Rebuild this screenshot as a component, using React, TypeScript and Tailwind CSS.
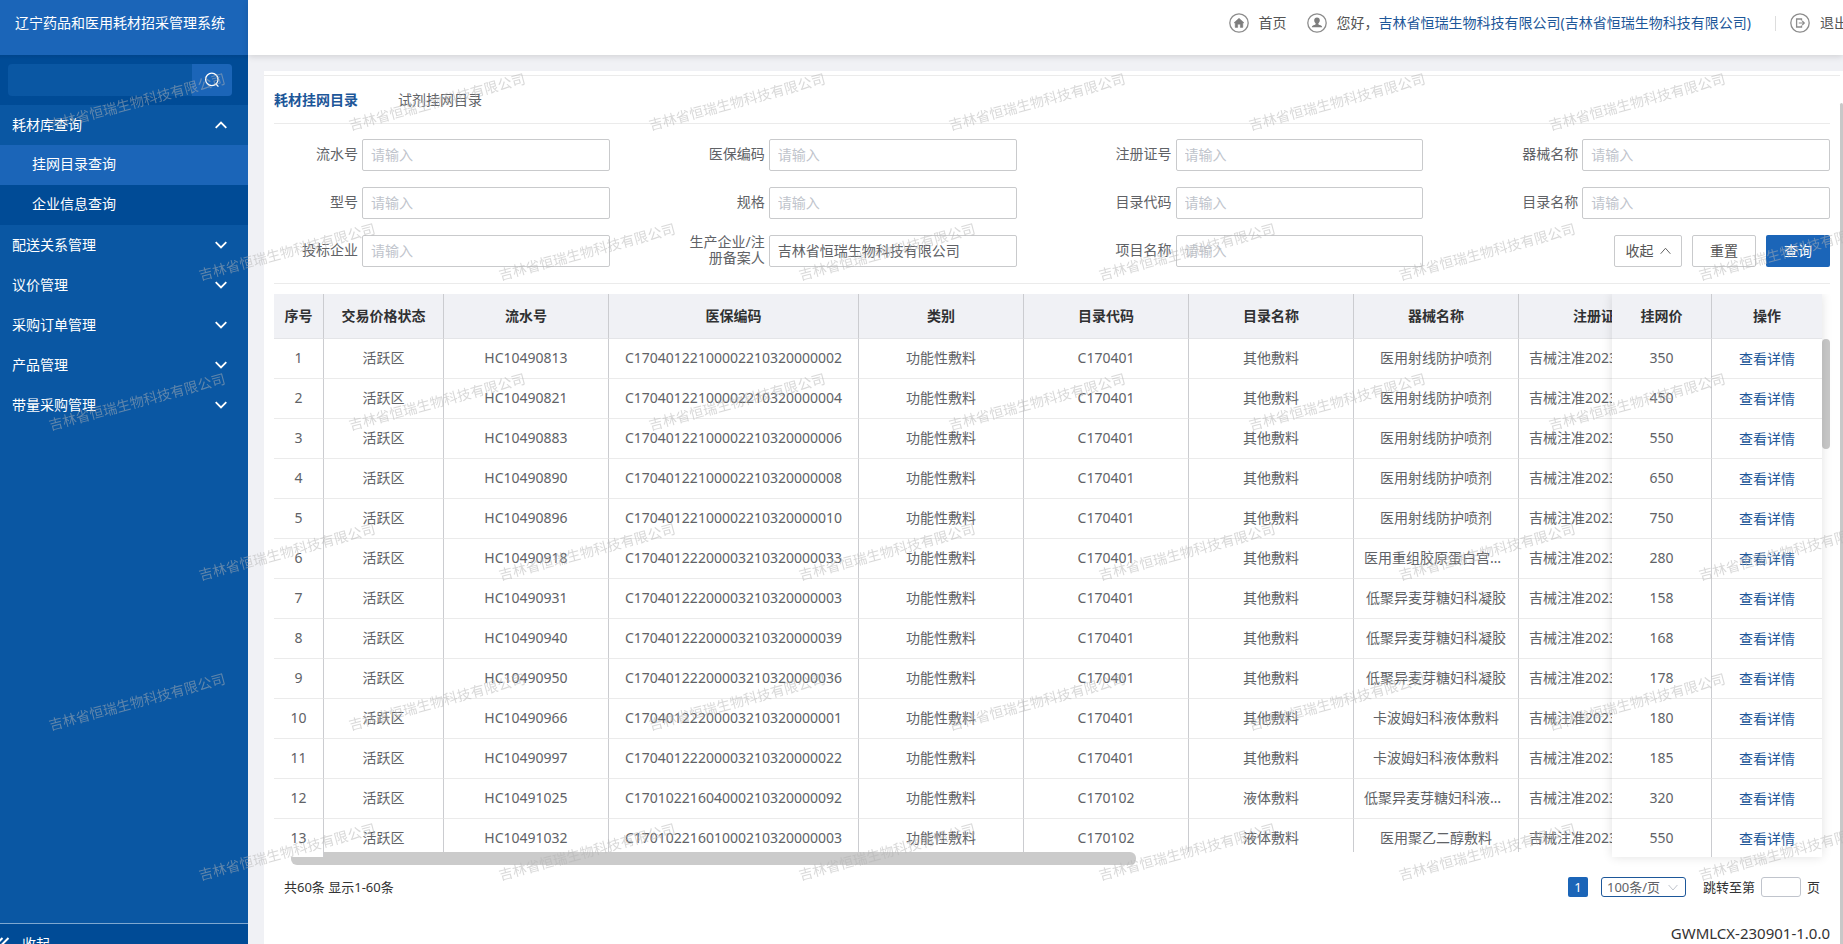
import React, { useId, useState } from "react";

const COMPANY = "吉林省恒瑞生物科技有限公司";

const MENU = ["配送关系管理", "议价管理", "采购订单管理", "产品管理", "带量采购管理"];

type Row = {
  no: string;
  code: string;
  catCode: string;
  catName: string;
  device: string;
  price: number;
};

const ROWS: Row[] = [
  { no: "HC10490813", code: "C17040122100002210320000002", catCode: "C170401", catName: "其他敷料", device: "医用射线防护喷剂", price: 350 },
  { no: "HC10490821", code: "C17040122100002210320000004", catCode: "C170401", catName: "其他敷料", device: "医用射线防护喷剂", price: 450 },
  { no: "HC10490883", code: "C17040122100002210320000006", catCode: "C170401", catName: "其他敷料", device: "医用射线防护喷剂", price: 550 },
  { no: "HC10490890", code: "C17040122100002210320000008", catCode: "C170401", catName: "其他敷料", device: "医用射线防护喷剂", price: 650 },
  { no: "HC10490896", code: "C17040122100002210320000010", catCode: "C170401", catName: "其他敷料", device: "医用射线防护喷剂", price: 750 },
  { no: "HC10490918", code: "C17040122200003210320000033", catCode: "C170401", catName: "其他敷料", device: "医用重组胶原蛋白宫颈凝胶", price: 280 },
  { no: "HC10490931", code: "C17040122200003210320000003", catCode: "C170401", catName: "其他敷料", device: "低聚异麦芽糖妇科凝胶", price: 158 },
  { no: "HC10490940", code: "C17040122200003210320000039", catCode: "C170401", catName: "其他敷料", device: "低聚异麦芽糖妇科凝胶", price: 168 },
  { no: "HC10490950", code: "C17040122200003210320000036", catCode: "C170401", catName: "其他敷料", device: "低聚异麦芽糖妇科凝胶", price: 178 },
  { no: "HC10490966", code: "C17040122200003210320000001", catCode: "C170401", catName: "其他敷料", device: "卡波姆妇科液体敷料", price: 180 },
  { no: "HC10490997", code: "C17040122200003210320000022", catCode: "C170401", catName: "其他敷料", device: "卡波姆妇科液体敷料", price: 185 },
  { no: "HC10491025", code: "C17010221604000210320000092", catCode: "C170102", catName: "液体敷料", device: "低聚异麦芽糖妇科液体敷料", price: 320 },
  { no: "HC10491032", code: "C17010221601000210320000003", catCode: "C170102", catName: "液体敷料", device: "医用聚乙二醇敷料", price: 550 },
];

function Chevron({ up = false }: { up?: boolean }) {
  return (
    <svg viewBox="0 0 12 8" className="h-2 w-3" fill="none" stroke="currentColor" strokeWidth="1.8">
      <path d={up ? "M0.7 6.8 L6 1.6 L11.3 6.8" : "M0.7 1.2 L6 6.4 L11.3 1.2"} />
    </svg>
  );
}

function HomeIcon() {
  return (
    <svg viewBox="0 0 20 20" className="size-5" fill="none">
      <circle cx="10" cy="10" r="9.2" stroke="#8c8c8c" strokeWidth="1.3" />
      <path d="M10 5.2 L15 9.8 H13.8 V14.4 H11.3 V11.2 H8.7 V14.4 H6.2 V9.8 H5 Z" fill="#7d7d7d" stroke="#7d7d7d" strokeWidth="0.5" strokeLinejoin="round" />
    </svg>
  );
}

function UserIcon() {
  return (
    <svg viewBox="0 0 20 20" className="size-5" fill="none">
      <circle cx="10" cy="10" r="9.2" stroke="#8c8c8c" strokeWidth="1.3" />
      <path
        d="M10 4.4 C8.2 4.4 7.2 5.7 7.2 7.3 C7.2 8.6 7.8 9.8 8.7 10.5 C8.7 11.4 8.4 11.8 7.4 12.1 C6 12.5 5 12.9 4.8 14.2 H15.2 C15 12.9 14 12.5 12.6 12.1 C11.6 11.8 11.3 11.4 11.3 10.5 C12.2 9.8 12.8 8.6 12.8 7.3 C12.8 5.7 11.8 4.4 10 4.4 Z"
        fill="#7d7d7d"
      />
    </svg>
  );
}

function LogoutIcon() {
  return (
    <svg viewBox="0 0 20 20" className="size-5" fill="none" stroke="#8c8c8c">
      <circle cx="10" cy="10" r="9.2" strokeWidth="1.3" />
      <path d="M11.5 7.6 V6 H6.6 V14 H11.5 V12.4" strokeWidth="1.3" />
      <path d="M8.8 10 H14 M12.2 7.9 L14.3 10 L12.2 12.1" strokeWidth="1.2" />
    </svg>
  );
}

function Sidebar() {
  const [keyword, setKeyword] = useState("");
  return (
    <aside className="flex w-[248px] shrink-0 flex-col bg-[#0a57a3] text-white">
      <h1 className="h-[55px] shrink-0 bg-[#1b65b8] pl-[15px] pt-3 text-sm leading-[22px]">
        辽宁药品和医用耗材招采管理系统
      </h1>
      <div className="shrink-0 bg-[#004b96] bg-linear-to-b from-[#00458c] to-[#004b96] to-10% py-[9px] pl-2 pr-4">
        <div className="flex h-8 overflow-hidden rounded bg-[#0a57a3]">
          <input
            aria-label="菜单搜索"
            value={keyword}
            onChange={(e) => setKeyword(e.target.value)}
            className="min-w-0 flex-1 bg-transparent px-3 text-sm outline-none"
          />
          <button type="button" aria-label="搜索" className="flex w-10 items-center justify-center bg-[#1b65b8]">
            <svg viewBox="0 0 16 16" className="size-4" fill="none" stroke="#fff" strokeWidth="1.3">
              <circle cx="7.8" cy="7.4" r="6.2" />
              <path d="M12 12 L14.4 14.6" />
            </svg>
          </button>
        </div>
      </div>
      <nav className="flex-1 text-sm">
        <button type="button" className="flex h-10 w-full items-center justify-between pl-3 pr-[21px]">
          耗材库查询
          <Chevron up />
        </button>
        <a href="#catalog" className="flex h-10 items-center bg-[#1b65b8] pb-0.5 pl-8">
          挂网目录查询
        </a>
        <a href="#company" className="flex h-10 items-center bg-[#004b96] pb-0.5 pl-8">
          企业信息查询
        </a>
        {MENU.map((m) => (
          <button key={m} type="button" className="flex h-10 w-full items-center justify-between pl-3 pr-[21px]">
            {m}
            <Chevron />
          </button>
        ))}
      </nav>
      <button
        type="button"
        className="-mb-[19px] flex h-10 shrink-0 items-center gap-3 border-t border-[#7fa8d0] bg-[#004b96] text-sm"
      >
        <svg viewBox="0 0 16 16" className="-ml-[6px] size-4" fill="none" stroke="#fff" strokeWidth="2">
          <path d="M8.5 2 L2.5 8 L8.5 14 M14.5 2 L8.5 8 L14.5 14" />
        </svg>
        收起
      </button>
    </aside>
  );
}

function Header() {
  return (
    <header className="relative z-10 h-[55px] shrink-0 overflow-visible bg-white shadow-[0_2px_6px_rgba(0,0,0,0.12)]">
      <div className="-mr-[5px] flex items-center justify-end pt-[9px] text-sm leading-7 whitespace-nowrap text-[#555]">
        <a href="#home" className="flex items-center gap-2.5">
          <HomeIcon />
          首页
        </a>
        <div className="ml-5 flex items-center">
          <UserIcon />
          <span className="ml-2.5">您好，</span>
          <a href="#account" className="text-[#1d5799]">
            {COMPANY}({COMPANY})
          </a>
        </div>
        <div className="ml-6 mr-3.5 h-[15px] w-px bg-[#ddd]" />
        <a href="#logout" className="flex items-center gap-2.5">
          <LogoutIcon />
          退出
        </a>
      </div>
    </header>
  );
}

function Field({ label, value = "" }: { label: string; value?: string }) {
  const id = useId();
  const [text, setText] = useState(value);
  return (
    <div className="flex h-8 items-center gap-1">
      <label htmlFor={id} className="w-[84px] shrink-0 pb-0.5 text-right text-sm leading-4 text-[#606266]">
        {label}
      </label>
      <input
        id={id}
        value={text}
        placeholder="请输入"
        onChange={(e) => setText(e.target.value)}
        className="h-8 min-w-0 flex-1 rounded-xs border border-[#c9cacc] bg-white px-2 pb-0.5 text-sm text-[#606266] outline-none placeholder:text-[#c0c4cc]"
      />
    </div>
  );
}

function SearchForm() {
  return (
    <form className="border-b border-[#ebebeb] pb-4 pt-[15px]" onSubmit={(e) => e.preventDefault()}>
      <div className="grid grid-cols-4 gap-x-[71px] gap-y-4">
        <Field label="流水号" />
        <Field label="医保编码" />
        <Field label="注册证号" />
        <Field label="器械名称" />
        <Field label="型号" />
        <Field label="规格" />
        <Field label="目录代码" />
        <Field label="目录名称" />
        <Field label="投标企业" />
        <Field label="生产企业/注册备案人" value={COMPANY} />
        <Field label="项目名称" />
        <div className="flex justify-end gap-2.5 text-sm text-[#555]">
          <button type="button" className="flex h-8 w-[68px] items-center justify-center gap-1.5 rounded-xs border border-[#c9cacc]">
            收起
            <svg viewBox="0 0 12 8" className="h-2 w-[11px]" fill="none" stroke="currentColor" strokeWidth="1">
              <path d="M0.7 7 L6 1 L11.3 7" />
            </svg>
          </button>
          <button type="reset" className="h-8 w-16 rounded-xs border border-[#c9cacc]">
            重置
          </button>
          <button type="submit" className="h-8 w-16 rounded-xs bg-[#1b65b8] text-white">
            查询
          </button>
        </div>
      </div>
    </form>
  );
}

const TH = "sticky top-0 h-[45px] border-b border-b-[#e4e5e8] bg-[#f0f1f5] px-2.5 text-center font-bold";
const TD = "h-10 truncate border-b border-b-[#ebebeb] px-2.5 text-center";
const LINE = "border-r border-r-[#cbccd0]";

function ResultTable() {
  return (
    <div className="relative mt-2.5 pr-2">
      <div className="h-[563px] overflow-auto [scrollbar-width:none]">
        <table className="w-full min-w-[1620px] table-fixed border-separate border-spacing-0 text-sm text-[#606266]">
          <colgroup>
            <col className="w-[50px]" />
            <col className="w-[120px]" />
            <col className="w-[165px]" />
            <col className="w-[250px]" />
            <col className="w-[165px]" />
            <col className="w-[165px]" />
            <col className="w-[165px]" />
            <col className="w-[165px]" />
            <col className="w-[165px]" />
            <col className="w-[100px]" />
            <col className="w-[110px]" />
          </colgroup>
          <thead className="text-[#303133]">
            <tr>
              <th className="sticky left-0 top-0 z-30 h-[45px] border-b border-r border-b-[#e4e5e8] border-r-[#cbccd0] bg-[#f0f1f5] text-center font-bold">序号</th>
              {["交易价格状态", "流水号", "医保编码", "类别", "目录代码", "目录名称", "器械名称", "注册证号"].map((h) => (
                <th key={h} className={`${TH} ${LINE} z-10`}>
                  {h}
                </th>
              ))}
              <th className={`${TH} ${LINE} right-[110px] z-30`}>挂网价</th>
              <th className={`${TH} right-0 z-30`}>操作</th>
            </tr>
          </thead>
          <tbody>
            {ROWS.map((r, i) => (
              <tr key={r.no}>
                <td className="sticky left-0 z-20 h-10 border-b border-r border-b-[#ebebeb] border-r-[#cbccd0] bg-white pb-0.5 text-center">{i + 1}</td>
                <td className={`${TD} ${LINE} pb-0.5`}>活跃区</td>
                <td className={`${TD} ${LINE} pb-0.5`}>{r.no}</td>
                <td className={`${TD} ${LINE} pb-0.5`}>{r.code}</td>
                <td className={`${TD} ${LINE} pb-0.5`}>功能性敷料</td>
                <td className={`${TD} ${LINE} pb-0.5`}>{r.catCode}</td>
                <td className={`${TD} ${LINE} pb-0.5`}>{r.catName}</td>
                <td className={`${TD} ${LINE} pb-0.5`}>{r.device}</td>
                <td className={`${TD} ${LINE} pb-0.5`}>吉械注准20232140001</td>
                <td className={`${TD} ${LINE} sticky right-[110px] z-20 bg-white pb-0.5`}>{r.price}</td>
                <td className={`${TD} sticky right-0 z-20 bg-white`}>
                  <a href="#detail" className="text-[#1d5799]">
                    查看详情
                  </a>
                </td>
              </tr>
            ))}
          </tbody>
        </table>
      </div>
      {/* horizontal scrollbar, partly under the pinned columns */}
      <div className="absolute inset-x-0 bottom-0 z-10 h-[5px] bg-white">
        <div className="ml-[17px] h-[13px] w-[845px] rounded-md bg-[#cbcbcb]" />
      </div>
      {/* vertical scrollbar */}
      <div className="absolute right-0 top-[45px] h-[110px] w-2 rounded bg-[#c8c8c8]" />
      {/* shadow round the columns pinned to the right */}
      <div className="pointer-events-none absolute bottom-0 right-2 top-0 z-10 w-[210px] shadow-[0_0_10px_rgba(0,0,0,0.12)] [clip-path:inset(0_-12px_-16px_-12px)]" />
    </div>
  );
}

function Pagination() {
  return (
    <div className="mt-5 flex h-5 items-center justify-between px-2.5 text-[13px] leading-5 text-[#333]">
      <span>共60条 显示1-60条</span>
      <div className="flex items-center">
        <button type="button" className="size-5 rounded-xs bg-[#1b65b8] text-white">
          1
        </button>
        <div className="relative ml-[13px] flex h-5 w-[85px]">
          <select
            aria-label="每页条数"
            className="h-5 w-full appearance-none rounded-[3px] border border-[#1d5799] bg-white pl-[5px] leading-4 text-[#606266] outline-none"
          >
            <option>100条/页</option>
          </select>
          <svg viewBox="0 0 12 8" className="pointer-events-none absolute right-2 top-[7px] h-[7px] w-[10px]" fill="none" stroke="#c0c4cc" strokeWidth="1.2">
            <path d="M0.7 1 L6 7 L11.3 1" />
          </svg>
        </div>
        <label htmlFor="jump" className="ml-[17px]">
          跳转至第
        </label>
        <input id="jump" className="ml-1.5 mr-1.5 h-5 w-10 rounded-[3px] border border-[#c0c4cc] px-1 outline-none" />
        页
      </div>
    </div>
  );
}

function Watermark() {
  return (
    <div aria-hidden="true" className="pointer-events-none absolute inset-0 z-50 overflow-hidden pt-[27px] text-sm text-[#b4b4b4]/50">
      {[0, 1, 2, 3, 4, 5].map((r) => (
        <div key={r} className={r % 2 ? "flex h-[150px] items-center pl-[196px]" : "flex h-[150px] items-center pl-[46px]"}>
          {[0, 1, 2, 3, 4, 5].map((c) => (
            <div key={c} className="w-[300px] shrink-0">
              <span className="inline-block -rotate-15 whitespace-nowrap">{COMPANY}</span>
            </div>
          ))}
        </div>
      ))}
    </div>
  );
}

export default function App() {
  return (
    <div className="relative flex h-screen overflow-hidden bg-[#f0f1f5] font-['Noto_Sans','Noto_Sans_CJK_SC',sans-serif]">
      <Sidebar />
      <div className="flex min-w-0 flex-1 flex-col">
        <Header />
        <main className="relative flex min-h-0 flex-1 pl-4 pt-4">
          <div className="min-w-0 flex-1 bg-white pr-[3px] pt-1">
            <div className="border-t border-[#ebebeb] px-2.5">
              <div role="tablist" className="flex h-12 items-center gap-10 border-b border-[#ebebeb] text-sm">
                <button type="button" role="tab" aria-selected="true" className="font-bold text-[#1d5799]">
                  耗材挂网目录
                </button>
                <button type="button" role="tab" aria-selected="false" className="text-[#606266]">
                  试剂挂网目录
                </button>
              </div>
              <SearchForm />
              <ResultTable />
              <Pagination />
              <p className="mt-[26px] text-right text-[15px] leading-5 text-[#333]">GWMLCX-230901-1.0.0</p>
            </div>
          </div>
          <div className="absolute bottom-0 right-0 top-12 w-[3px] rounded-t bg-[#c8c8c8]" />
        </main>
      </div>
      <Watermark />
    </div>
  );
}
